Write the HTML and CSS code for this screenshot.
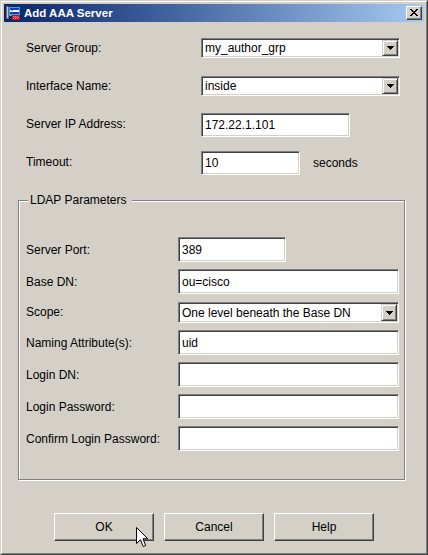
FILE: index.html
```html
<!DOCTYPE html>
<html lang="en">
<head>
<meta charset="utf-8">
<title>Add AAA Server</title>
<link rel="stylesheet" href="styles.css">
</head>
<body>
<div class="window">
  <div class="frame">
    <div class="titlebar">
      <svg class="app-icon" width="16" height="16" viewBox="0 0 16 16" shape-rendering="crispEdges">
        <rect x="1" y="1" width="3" height="13" fill="#6c6c6c"/>
        <rect x="2" y="2" width="1" height="11" fill="#c8c8c8"/>
        <rect x="4" y="2" width="11" height="9" fill="#3aa6e0"/>
        <rect x="5" y="3" width="9" height="6" fill="#1040c0"/>
        <rect x="5" y="5" width="9" height="2" fill="#ffffff"/>
        <rect x="6" y="5" width="2" height="1" fill="#20c0ff"/>
        <rect x="7" y="10" width="8" height="5" fill="#c01020"/>
        <path d="M8 11h1v1h-1zM10 11h1v1h-1zM12 11h1v1h-1zM9 12h1v1h-1zM11 12h1v1h-1zM13 12h1v1h-1zM8 13h1v1h-1zM10 13h1v1h-1zM12 13h1v1h-1z" fill="#ff9090"/>
      </svg>
      <span class="title">Add AAA Server</span>
      <span class="close-btn">
        <svg width="8" height="7" viewBox="0 0 8 7" shape-rendering="crispEdges">
          <path d="M0 0h2v1h-2zM6 0h2v1h-2zM1 1h2v1h-2zM5 1h2v1h-2zM2 2h4v1h-4zM3 3h2v1h-2zM2 4h4v1h-4zM1 5h2v1h-2zM5 5h2v1h-2zM0 6h2v1h-2zM6 6h2v1h-2z" fill="#000"/>
        </svg>
      </span>
    </div>

    <div class="content">
      <div class="top-form">
        <span class="label">Server Group:</span>
        <div class="field combo combo-wide"><span class="combo-text">my_author_grp</span><span class="combo-btn"><svg width="7" height="4" viewBox="0 0 7 4" shape-rendering="crispEdges"><path d="M0 0h7v1h-1v1h-1v1h-1v1h-1v-1h-1v-1h-1v-1h-1z" fill="#000"/></svg></span></div>

        <span class="label">Interface Name:</span>
        <div class="field combo combo-wide"><span class="combo-text">inside</span><span class="combo-btn"><svg width="7" height="4" viewBox="0 0 7 4" shape-rendering="crispEdges"><path d="M0 0h7v1h-1v1h-1v1h-1v1h-1v-1h-1v-1h-1v-1h-1z" fill="#000"/></svg></span></div>

        <span class="label">Server IP Address:</span>
        <div class="field text-field ip-field">172.22.1.101</div>

        <span class="label">Timeout:</span>
        <div class="cell-inline">
          <div class="field text-field timeout-field">10</div>
          <span class="unit">seconds</span>
        </div>
      </div>

      <fieldset class="group">
        <legend class="group-title">LDAP Parameters</legend>
        <div class="group-form">
          <span class="label">Server Port:</span>
          <div class="field text-field tall port-field">389</div>

          <span class="label">Base DN:</span>
          <div class="field text-field tall full">ou=cisco</div>

          <span class="label">Scope:</span>
          <div class="field combo full scope"><span class="combo-text">One level beneath the Base DN</span><span class="combo-btn"><svg width="7" height="4" viewBox="0 0 7 4" shape-rendering="crispEdges"><path d="M0 0h7v1h-1v1h-1v1h-1v1h-1v-1h-1v-1h-1v-1h-1z" fill="#000"/></svg></span></div>

          <span class="label">Naming Attribute(s):</span>
          <div class="field text-field tall full">uid</div>

          <span class="label">Login DN:</span>
          <div class="field text-field tall full"></div>

          <span class="label">Login Password:</span>
          <div class="field text-field tall full"></div>

          <span class="label">Confirm Login Password:</span>
          <div class="field text-field tall full"></div>
        </div>
      </fieldset>

      <div class="buttons">
        <span class="btn">OK</span>
        <span class="btn">Cancel</span>
        <span class="btn">Help</span>
      </div>
    </div>
  </div>

  <svg class="cursor" width="13" height="21" viewBox="0 0 13 21">
    <path d="M0.5 0.5 V16.5 L4.5 12.8 L7.2 19.5 L9.6 18.5 L7 11.8 H11.8 Z" fill="#fff" stroke="#000" stroke-width="1" stroke-linejoin="miter"/>
  </svg>
</div>
</body>
</html>
```

FILE: styles.css
```css
* {
  box-sizing: border-box;
}

html,
body {
  margin: 0;
  padding: 0;
}

body {
  width: 428px;
  height: 555px;
  overflow: hidden;
  background: #d4d0c8;
  font-family: "Liberation Sans", Arial, sans-serif;
  font-size: 12px;
  color: #000;
}

.window {
  position: relative;
  width: 428px;
  height: 555px;
  border: 1px solid;
  border-color: #d4d0c8 #404040 #404040 #d4d0c8;
  background: #d4d0c8;
}

.frame {
  height: 100%;
  border: 1px solid;
  border-color: #fff #808080 #808080 #fff;
  padding: 2px;
  display: flex;
  flex-direction: column;
}

/* ---------- title bar ---------- */
.titlebar {
  height: 18px;
  flex: none;
  display: flex;
  align-items: center;
  padding: 0 2px 0 1px;
  background: linear-gradient(to right, #0a246a 0%, #3a5c98 35%, #a6caf0 100%);
}

.app-icon {
  display: block;
  flex: none;
  margin-right: 3px;
}

.title {
  flex: 1;
  color: #fff;
  font-weight: bold;
  font-size: 11.5px;
  line-height: 14px;
  white-space: nowrap;
}

.close-btn {
  width: 16px;
  height: 14px;
  flex: none;
  display: flex;
  align-items: center;
  justify-content: center;
  background: #d4d0c8;
  border: 1px solid;
  border-color: #fff #404040 #404040 #fff;
  box-shadow: inset -1px -1px 0 #808080;
  padding: 0 1px 1px 0;
}

.close-btn svg {
  display: block;
}

/* ---------- content ---------- */
.content {
  flex: 1;
  display: flex;
  flex-direction: column;
}

.label {
  white-space: nowrap;
  line-height: 14px;
}

.top-form {
  margin-top: 7px;
  padding-left: 22px;
  display: grid;
  grid-template-columns: 175px auto;
  grid-template-rows: repeat(4, 38px);
  align-items: center;
}

.field {
  background: #fff;
  border: 1px solid;
  border-color: #808080 #fff #fff #808080;
  box-shadow: inset 1px 1px 0 #404040, inset -1px -1px 0 #d4d0c8;
  font-size: 12px;
  line-height: 14px;
  white-space: nowrap;
  overflow: hidden;
}

.text-field {
  height: 24px;
  padding: 0 2px 0 3px;
  display: flex;
  align-items: center;
}

.text-field.tall {
  height: 25px;
}

.ip-field {
  width: 149px;
  margin-top: 1px;
}

.timeout-field {
  width: 99px;
}

.cell-inline {
  display: flex;
  align-items: center;
  margin-top: 1px;
}

.unit {
  margin-left: 13px;
  line-height: 14px;
}

.combo {
  height: 20px;
  display: flex;
  align-items: center;
  padding: 0 1px 0 3px;
}

.combo-wide {
  width: 199px;
}

.combo-text {
  flex: 1;
  overflow: hidden;
}

.combo-btn {
  width: 16px;
  height: 16px;
  flex: none;
  display: flex;
  align-items: center;
  justify-content: center;
  background: #d4d0c8;
  border: 1px solid;
  border-color: #d4d0c8 #404040 #404040 #d4d0c8;
  box-shadow: inset 1px 1px 0 #fff, inset -1px -1px 0 #808080;
}

.combo-btn svg {
  display: block;
}

/* ---------- group box ---------- */
.group {
  margin: 12px 0 0 14px;
  width: 387px;
  min-width: 0;
  padding: 30px 4px 28px 7px;
  border: 1px solid #808080;
  box-shadow: inset 1px 1px 0 #fff, 1px 1px 0 #fff;
}

.group-title {
  margin-left: 2px;
  padding: 0 5px 0 2px;
  line-height: 14px;
  font-size: 12px;
  background: #d4d0c8;
}

.group-form {
  display: grid;
  grid-template-columns: 152px 221px;
  grid-template-rows: 25px 25px 22px 25px 25px 25px 25px;
  row-gap: 7px;
  align-items: center;
}

.port-field {
  width: 108px;
}

.full {
  width: 221px;
}

.scope {
  height: 21px;
  align-self: end;
}

.scope .combo-btn {
  height: 17px;
}

/* ---------- buttons ---------- */
.buttons {
  margin-top: 33px;
  display: flex;
  justify-content: center;
  gap: 10px;
}

.btn {
  width: 100px;
  height: 28px;
  display: flex;
  align-items: center;
  justify-content: center;
  background: #d4d0c8;
  border: 1px solid;
  border-color: #fff #404040 #404040 #fff;
  box-shadow: inset -1px -1px 0 #808080;
  line-height: 14px;
  padding-bottom: 1px;
}

/* ---------- mouse pointer overlay ---------- */
.cursor {
  position: absolute;
  left: 135px;
  top: 526px;
  display: block;
}
```
